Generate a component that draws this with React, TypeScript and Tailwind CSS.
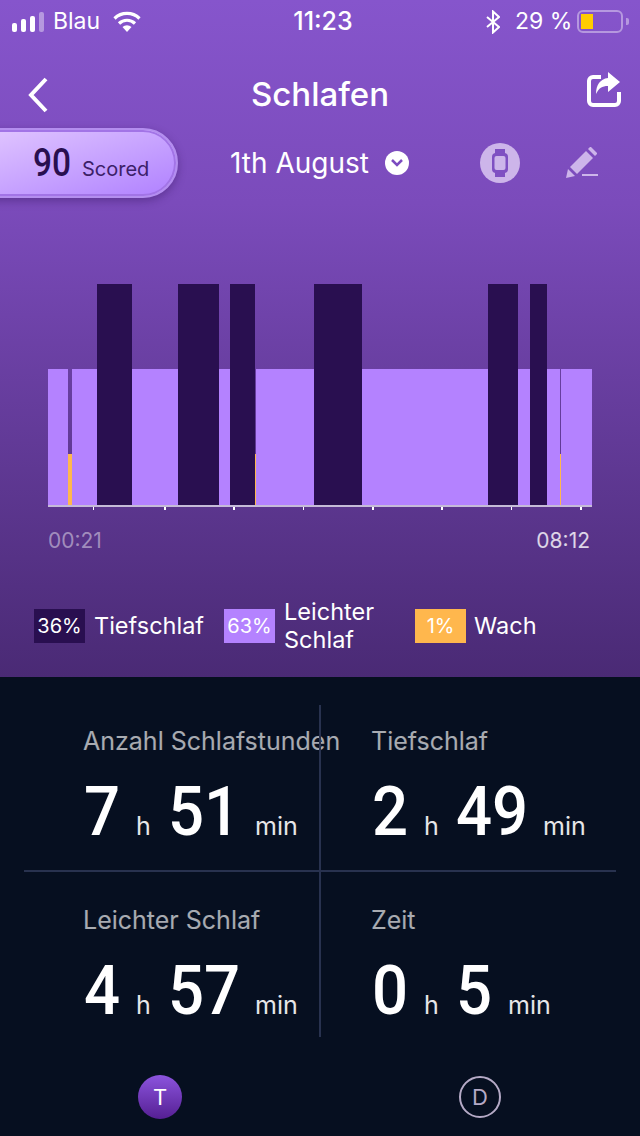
const segments = [
	{ kind: "light", w: "w-[20px]" },
	{ kind: "wake", w: "w-[4px]" },
	{ kind: "light", w: "w-[25px]" },
	{ kind: "deep", w: "w-[35px]" },
	{ kind: "light", w: "w-[46px]" },
	{ kind: "deep", w: "w-[41px]" },
	{ kind: "light", w: "w-[11px]" },
	{ kind: "deep", w: "w-[25px]" },
	{ kind: "wake", w: "w-[1px]" },
	{ kind: "light", w: "w-[58px]" },
	{ kind: "deep", w: "w-[48px]" },
	{ kind: "light", w: "w-[126px]" },
	{ kind: "deep", w: "w-[30px]" },
	{ kind: "light", w: "w-[12px]" },
	{ kind: "deep", w: "w-[17px]" },
	{ kind: "light", w: "w-[13px]" },
	{ kind: "wake", w: "w-[1px]" },
	{ kind: "light", w: "w-[31px]" },
]

const kindClass: Record<string, string> = {
	light: "h-[136px] bg-[#b482ff]",
	deep: "h-[221px] bg-[#290f50]",
	wake: "h-[51px] bg-[#ffb74d]",
}

const ticks = [
	"ml-[45px] w-[1px]",
	"ml-[70px] w-[2px]",
	"ml-[67px] w-[2px]",
	"ml-[68px] w-[1px]",
	"ml-[68px] w-[2px]",
	"ml-[67px] w-[2px]",
	"ml-[68px] w-[1px]",
	"ml-[68px] w-[2px]",
]

const StatusBar = () => (
	<div className="flex h-[40px] items-center pt-[3px] text-[23px] text-white">
		<div className="ml-[12px] flex items-end gap-[4px]">
			<div className="h-[9px] w-[5px] rounded-[2px] bg-white" />
			<div className="h-[13px] w-[5px] rounded-[2px] bg-white" />
			<div className="h-[16px] w-[5px] rounded-[2px] bg-white" />
			<div className="h-[20px] w-[5px] rounded-[2px] bg-white/40" />
		</div>
		<span className="ml-[9px] w-[60px]">Blau</span>
		<svg width="28" height="21" viewBox="0 0 28 21">
			<path d="M1.500 7.500a18 18 0 0 1 25 0M6 12.500a11.500 11.500 0 0 1 16 0" fill="none" stroke="white" strokeWidth="3.200" />
			<path d="M9.500 16a6.500 6.500 0 0 1 9 0L14 21z" fill="white" />
		</svg>
		<span className="ml-[140px] w-[84px] text-center text-[25px] font-medium">11:23</span>
		<svg width="14" height="24" viewBox="0 0 14 24" className="ml-[121px]">
			<path d="M1 7l12 10-6 5.500V1.500L13 7 1 17" fill="none" stroke="white" strokeWidth="2" />
		</svg>
		<span className="ml-[15px] w-[62px] whitespace-nowrap">29 %</span>
		<div className="flex h-[23px] w-[46px] items-center rounded-[6px] border-2 border-white/40 px-[2px]">
			<div className="h-[15px] w-[12px] bg-[#ffcc00]" />
		</div>
		<div className="ml-[3px] h-[7px] w-[3px] rounded-r-[2px] bg-white/40" />
	</div>
)

const Header = () => (
	<div className="relative flex h-[68px] items-center justify-center">
		<svg width="24" height="38" viewBox="0 0 24 38" className="absolute left-[26px] top-[16px]">
			<path d="M20 3L5 19l15 16" fill="none" stroke="white" strokeWidth="4" />
		</svg>
		<span className="mt-[2px] text-[33px] font-medium text-white">Schlafen</span>
		<svg width="36" height="40" viewBox="0 0 36 40" className="absolute left-[586px] top-[12px]">
			<path d="M15 5H7a4 4 0 0 0-4 4v20a4 4 0 0 0 4 4h22a4 4 0 0 0 4-4V20" fill="none" stroke="white" strokeWidth="4" />
			<path d="M22 0l12 10-12 10v-6c-6 0-9 2-12 8 0-9 4-15 12-16z" fill="white" />
		</svg>
	</div>
)

const ScoreRow = () => (
	<div className="relative flex h-[70px] items-center">
		<div className="ml-[-30px] flex h-[70px] w-[208px] items-center rounded-r-[35px] border-2 border-[#b48eef] bg-gradient-to-br from-[#e3c8ff] to-[#b080ff] pl-[61px] shadow-[0_3px_8px_rgba(50,20,90,0.4),inset_0_0_0_2px_#a274e6]">
			<div className="flex items-baseline">
				<span className="w-[49px] origin-left scale-x-[0.88] font-['Roboto',sans-serif] text-[38px] font-medium leading-none text-[#290f50]">90</span>
				<span className="text-[20px] leading-none text-[#3c2068]">Scored</span>
			</div>
		</div>
		<span className="ml-[52px] text-[28px] text-white">1th August</span>
		<div className="ml-[16px] flex h-[24px] w-[24px] items-center justify-center rounded-full bg-white">
			<svg width="14" height="10" viewBox="0 0 14 10">
				<path d="M2 2l5 5 5-5" fill="none" stroke="#7c4cc0" strokeWidth="2.500" />
			</svg>
		</div>
		<div className="ml-[71px] flex h-[40px] w-[40px] items-center justify-center rounded-full bg-[#cdb5ea]">
			<svg width="16" height="28" viewBox="0 0 16 28">
				<path d="M3 0h10v5H3zM3 23h10v5H3z" fill="#7f50c2" />
				<rect x="0" y="4" width="16" height="20" rx="4" fill="#7f50c2" />
				<rect x="2.500" y="7" width="11" height="14" rx="2" fill="#cdb5ea" />
			</svg>
		</div>
		<svg width="34" height="32" viewBox="0 0 34 32" className="ml-[46px]">
			<path d="M0 31l2-9 7 7z" fill="#cdb5ea" />
			<path d="M4 20L20 4l7 7-16 16z" fill="#cdb5ea" />
			<path d="M22 2l2-2 1 0 6 6 0 1-2 2z" fill="#cdb5ea" />
			<rect x="16" y="27" width="16" height="2" fill="#cdb5ea" />
		</svg>
	</div>
)

const Chart = () => (
	<div className="mt-[86px] px-[48px]">
		<div className="flex h-[221px] items-end">
			{segments.map((s, i) => (
				<div key={i} className={`${s.w} ${kindClass[s.kind]}`} />
			))}
		</div>
		<div className="h-[2px] bg-[#c5bbd8]" />
		<div className="flex h-[3px]">
			{ticks.map((t, i) => (
				<div key={i} className={`${t} shrink-0 bg-white`} />
			))}
		</div>
		<div className="mt-[20px] flex justify-between pr-[2px] text-[21px] leading-[22px]">
			<span className="text-white/45">00:21</span>
			<span className="text-white/80">08:12</span>
		</div>
	</div>
)

const Legend = () => (
	<div className="mt-[46px] flex items-center pl-[34px] text-[23.500px] leading-[28px] text-white">
		<div className="flex h-[34px] w-[51px] items-center justify-center bg-[#290f50] text-[20px]">36%</div>
		<span className="ml-[9px]">Tiefschlaf</span>
		<div className="ml-[20px] flex h-[34px] w-[51px] items-center justify-center bg-[#b482ff] text-[20px]">63%</div>
		<span className="ml-[9px] w-[131px]">
			Leichter
			<br />
			Schlaf
		</span>
		<div className="flex h-[34px] w-[51px] items-center justify-center bg-[#ffb74d] text-[20px]">1%</div>
		<span className="ml-[8px]">Wach</span>
	</div>
)

type StatProps = { label: string; h: string; m: string; cell: string }

const Stat = ({ label, h, m, cell }: StatProps) => (
	<div className={`h-[166px] ${cell}`}>
		<div className="whitespace-nowrap text-[25px] leading-[30px] text-white/65">{label}</div>
		<div className="ml-[1px] mt-[18px] flex items-baseline whitespace-nowrap text-white">
			<span className="w-[52px] origin-left scale-x-[0.92] font-['Roboto',sans-serif] text-[69px] font-medium leading-[76px]">{h}</span>
			<span className="w-[32px] text-[25px] text-white/90">h</span>
			<span className={`${m.length > 1 ? "w-[87px]" : "w-[52px]"} origin-left scale-x-[0.92] font-['Roboto',sans-serif] text-[69px] font-medium leading-[76px]`}>{m}</span>
			<span className="text-[25px] text-white/90">min</span>
		</div>
	</div>
)

const App = () => {
	return (
		<div className="flex h-[1136px] w-[640px] flex-col overflow-hidden bg-[#060f20] font-['Inter',sans-serif]">
			<div className="h-[677px] shrink-0 bg-gradient-to-b from-[#8655cc] via-[#7b4bbb] via-30% to-[#4a2a75]">
				<StatusBar />
				<div className="h-[20px]" />
				<Header />
				<ScoreRow />
				<Chart />
				<Legend />
			</div>

			<div className="relative mx-[24px] mt-[28px] grid h-[332px] grid-cols-2">
				<div className="absolute bottom-0 left-[295px] top-0 w-[2px] bg-[#28324f]" />
				<div className="absolute left-0 right-0 top-[165px] h-[2px] bg-[#28324f]" />
				<Stat label="Anzahl Schlafstunden" h="7" m="51" cell="pl-[59px] pt-[21px]" />
				<Stat label="Tiefschlaf" h="2" m="49" cell="pl-[51px] pt-[21px]" />
				<Stat label="Leichter Schlaf" h="4" m="57" cell="pl-[59px] pt-[34px]" />
				<Stat label="Zeit" h="0" m="5" cell="pl-[51px] pt-[34px]" />
			</div>

			<div className="mt-[38px] flex items-center">
				<div className="ml-[138px] flex h-[44px] w-[44px] items-center justify-center rounded-full bg-gradient-to-b from-[#8c54de] to-[#561f94] text-[22px] text-white">T</div>
				<div className="ml-[277px] flex h-[42px] w-[42px] items-center justify-center rounded-full border-2 border-[#b5aac6] text-[22px] text-[#b5aac6]">D</div>
			</div>
		</div>
	)
}

export default App
